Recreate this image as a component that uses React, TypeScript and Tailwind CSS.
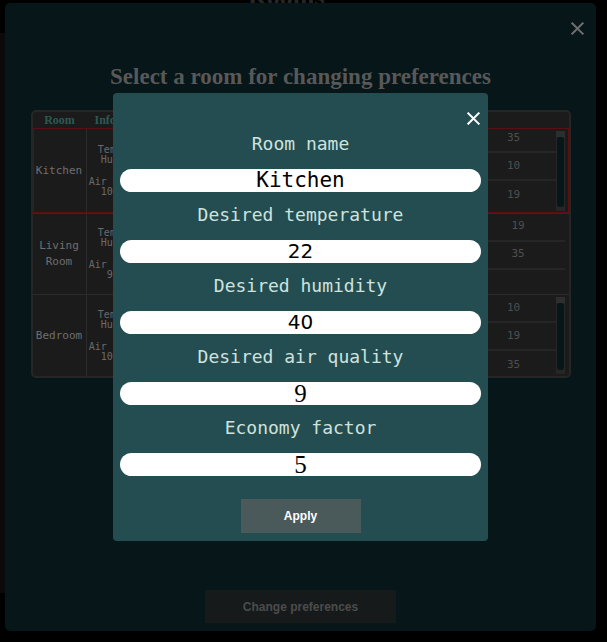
import React from 'react';

interface Room {
  name: string[];
  info: string[][];
  values: string[];
  scroll: boolean;
  selected?: boolean;
}

const rooms: Room[] = [
  { name: ['Kitchen'], info: [['Temperature: 19', 'Humidity: 35 %'], ['Air quality index:', '10 (very good)']], values: ['35', '10', '19'], scroll: true, selected: true },
  { name: ['Living', 'Room'], info: [['Temperature: 22', 'Humidity: 40 %'], ['Air quality index:', ' 9 (very good)']], values: ['19', '35', ''], scroll: false },
  { name: ['Bedroom'], info: [['Temperature: 21', 'Humidity: 38 %'], ['Air quality index:', '10 (very good)']], values: ['10', '19', '35'], scroll: true },
];

const fields = [
  { label: 'Room name', value: 'Kitchen', kind: 'mono' },
  { label: 'Desired temperature', value: '22', kind: 'sans' },
  { label: 'Desired humidity', value: '40', kind: 'sans' },
  { label: 'Desired air quality', value: '9', kind: 'serif' },
  { label: 'Economy factor', value: '5', kind: 'serif' },
];

const CloseIcon: React.FC<{ className?: string; stroke: string }> = ({ className, stroke }) => (
  <svg viewBox="0 0 14 14" className={className} fill="none">
    <path d="M1.5 1.5 L12.5 12.5 M12.5 1.5 L1.5 12.5" stroke={stroke} strokeWidth="2.2" strokeLinecap="square" />
  </svg>
);

const FieldValue: React.FC<{ kind: string; value: string }> = ({ kind, value }) => {
  if (kind === 'serif') {
    return (
      <div className="mt-[14px] w-full h-[23px] rounded-full bg-white text-black text-center font-['Liberation_Serif',serif] text-[25px] leading-[24px]">
        {value}
      </div>
    );
  }
  if (kind === 'sans') {
    return (
      <div className="mt-[14px] w-full h-[23px] rounded-full bg-white text-black text-center font-['DejaVu_Sans',sans-serif] text-[20px] leading-[23px]">
        {value}
      </div>
    );
  }
  return (
    <div className="mt-[14px] w-full h-[23px] rounded-full bg-white text-black text-center text-[21px] leading-[23px]">
      {value}
    </div>
  );
};

const RoomRow: React.FC<{ room: Room }> = ({ room }) => (
  <div
    className={`flex border-t border-[#2b2b2b] overflow-hidden ${
      room.selected ? 'h-[85px] outline outline-[1.5px] outline-[#5c0f0f] -outline-offset-1' : 'h-[82px]'
    }`}
  >
    <div className="w-[54px] flex flex-col items-center justify-center border-r border-[#2b2b2b] text-[11px] leading-[16px] text-[#6f6f6f]">
      {room.name.map((n) => (
        <span key={n}>{n}</span>
      ))}
    </div>
    <div className="w-[114px] flex flex-col items-center justify-center gap-[12px] border-r border-[#2b2b2b] text-[10px] leading-[10px] text-[#6a6a6a]">
      {room.info.map((group, g) => (
        <div key={g} className="flex flex-col items-center">
          {group.map((l) => (
            <span key={l} className="h-[10px] whitespace-pre">{l}</span>
          ))}
        </div>
      ))}
    </div>
    <div className="flex-1" />
    <div className="flex w-[97px] pr-[4px]">
      <div className={`flex-1 flex flex-col ${room.selected ? '-mt-[4px]' : ''}`}>
        {room.values.map((v, i) => (
          <div
            key={i}
            className={`h-[28px] shrink-0 flex items-center justify-center text-[11px] text-[#4f4f4f] ${
              i < 2 ? 'border-b-2 border-[#262626]' : ''
            }`}
          >
            {v}
          </div>
        ))}
      </div>
      {room.scroll && (
        <div className="w-[9px] mt-[2px] mb-[2px] bg-[#262626] flex flex-col">
          <div className="h-[6px] bg-[#2e2e2e]" />
          <div className="flex-1 mx-[1px] mb-[4px] rounded-[3px] bg-[#061619]" />
        </div>
      )}
    </div>
  </div>
);

export default function App() {
  return (
    <div className="relative w-[607px] h-[642px] overflow-hidden bg-black font-['DejaVu_Sans_Mono',monospace]">
      {/* page behind the overlays */}
      <div className="absolute left-[248px] top-[-23px] font-['Liberation_Serif',serif] font-bold text-[26px] text-[#262626]">
        Rooms
      </div>
      <div className="absolute left-0 top-[33px] w-[5px] h-[560px] bg-[#0a0a0a]" />

      {/* outer modal */}
      <div className="absolute left-[5px] top-[3px] w-[591px] h-[628px] rounded-[5px] bg-[#061619] flex flex-col items-center">
        <button className="absolute right-[12px] top-[19px] w-[13px] h-[13px]">
          <CloseIcon className="w-[13px] h-[13px]" stroke="#6e6e6e" />
        </button>
        <h2 className="mt-[61px] h-[26px] leading-[26px] font-['Liberation_Serif',serif] font-bold text-[23px] text-[#585858]">
          Select a room for changing preferences
        </h2>
        <div className="mt-[20px] w-[540px] h-[268px] rounded-[5px] border-2 border-[#262626] bg-[#1b1b1b] flex flex-col overflow-hidden">
          <div className="h-[16px] shrink-0 flex items-center font-['Liberation_Serif',serif] font-bold text-[12px] text-[#2c5a52]">
            <span className="w-[54px] text-center">Room</span>
            <span className="pl-[8px]">Info</span>
          </div>
          {rooms.map((r) => (
            <RoomRow key={r.name.join(' ')} room={r} />
          ))}
        </div>
        <button className="mt-[212px] w-[191px] h-[33px] bg-[#161a1b] font-['Liberation_Sans',Arial,sans-serif] font-bold text-[12px] text-[#4c4c4c]">
          Change preferences
        </button>
      </div>

      {/* inner modal */}
      <div className="absolute left-[113px] top-[93px] w-[375px] h-[448px] rounded-[4px] bg-[#234d50] flex flex-col items-center px-[7px] pt-[40px]">
        <button className="absolute right-[8px] top-[19px] w-[13px] h-[13px]">
          <CloseIcon className="w-[13px] h-[13px]" stroke="#ffffff" />
        </button>
        <div className="w-full flex flex-col gap-[12px]">
          {fields.map((f) => (
            <div key={f.label} className="flex flex-col items-center">
              <label className="h-[22px] leading-[22px] text-[18px] text-[#cfe2de]">{f.label}</label>
              <FieldValue kind={f.kind} value={f.value} />
            </div>
          ))}
        </div>
        <button className="mt-[23px] w-[120px] h-[34px] bg-[#4a5a5b] font-['Liberation_Sans',Arial,sans-serif] font-bold text-[12px] text-white">
          Apply
        </button>
      </div>
    </div>
  );
}
